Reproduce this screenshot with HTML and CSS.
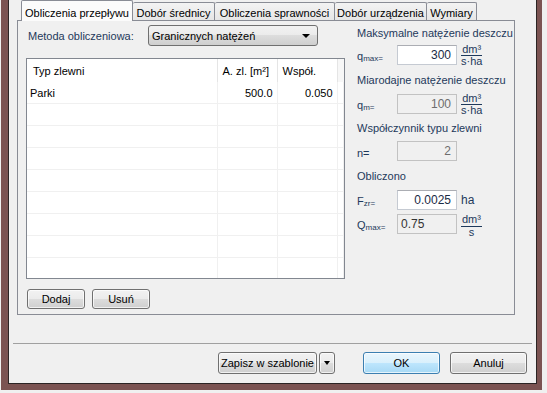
FILE: index.html
```html
<!DOCTYPE html>
<html lang="pl">
<head>
    <meta charset="UTF-8">
    <title>Obliczenia przepływu</title>
    <link rel="stylesheet" href="styles.css">
</head>
<body>
    <div class="window">
        <div class="client">
            <div class="tabctl">
                <div class="tabs">
                    <div class="tab active t1">Obliczenia przepływu</div>
                    <div class="tab t2">Dobór średnicy</div>
                    <div class="tab t3">Obliczenia sprawności</div>
                    <div class="tab t4">Dobór urządzenia</div>
                    <div class="tab t5">Wymiary</div>
                </div>
                <div class="page">
                    <div class="left">
                        <div class="method-row">
                            <span class="method-label">Metoda obliczeniowa:</span>
                            <div class="combo"><span>Granicznych natężeń</span><span class="arrow"></span></div>
                        </div>
                        <div class="listview">
                            <table>
                                <colgroup>
                                    <col class="c1"><col class="c2"><col class="c3"><col>
                                </colgroup>
                                <tr class="head">
                                    <th>Typ zlewni</th><th>A. zl. [m²]</th><th>Współ.</th><th class="filler"></th>
                                </tr>
                                <tr><td>Parki</td><td class="num">500.0</td><td class="num">0.050</td><td></td></tr>
                                <tr><td></td><td></td><td></td><td></td></tr>
                                <tr><td></td><td></td><td></td><td></td></tr>
                                <tr><td></td><td></td><td></td><td></td></tr>
                                <tr><td></td><td></td><td></td><td></td></tr>
                                <tr><td></td><td></td><td></td><td></td></tr>
                                <tr><td></td><td></td><td></td><td></td></tr>
                                <tr><td></td><td></td><td></td><td></td></tr>
                                <tr><td></td><td></td><td></td><td></td></tr>
                            </table>
                        </div>
                        <div class="list-buttons">
                            <button class="btn small">Dodaj</button>
                            <button class="btn small">Usuń</button>
                        </div>
                    </div>
                    <div class="right">
                        <div class="group-title">Maksymalne natężenie deszczu</div>
                        <div class="field f1">
                            <span class="sym">q<sub>max=</sub></span>
                            <span class="box">300</span>
                            <span class="frac"><span class="top">dm³</span><span>s·ha</span></span>
                        </div>
                        <div class="group-title g2">Miarodajne natężenie deszczu</div>
                        <div class="field f2">
                            <span class="sym">q<sub>m=</sub></span>
                            <span class="box disabled">100</span>
                            <span class="frac"><span class="top">dm³</span><span>s·ha</span></span>
                        </div>
                        <div class="group-title g3">Współczynnik typu zlewni</div>
                        <div class="field f3">
                            <span class="sym">n=</span>
                            <span class="box disabled">2</span>
                        </div>
                        <div class="group-title g4">Obliczono</div>
                        <div class="field f4">
                            <span class="sym">F<sub>zr=</sub></span>
                            <span class="box">0.0025</span>
                            <span class="unit">ha</span>
                        </div>
                        <div class="field f5">
                            <span class="sym">Q<sub>max=</sub></span>
                            <span class="box readonly">0.75</span>
                            <span class="frac"><span class="top">dm³</span><span>s</span></span>
                        </div>
                    </div>
                </div>
            </div>
            <div class="separator"></div>
            <div class="footer">
                <button class="btn save">Zapisz w szablonie</button>
                <button class="btn drop"><span class="arrow"></span></button>
                <button class="btn ok">OK</button>
                <button class="btn cancel">Anuluj</button>
            </div>
        </div>
    </div>
</body>
</html>
```

FILE: styles.css
```css
body {
    margin: 0;
    background-color: #f0f0f0;
    font-family: 'Liberation Sans', Arial, sans-serif;
    font-size: 11px;
    color: #000;
}

/* ramka okna */
.window {
    margin-left: 1px;
    width: 541px;
    height: 390px;
    box-sizing: border-box;
    border-style: solid;
    border-color: #7b5352;
    border-width: 0 5px 6px 7px;
}

.client {
    height: 100%;
    box-sizing: border-box;
    border: 1px solid #2b2424;
    border-top: none;
    background-color: #f0f0f0;
    display: flex;
    flex-direction: column;
}

/* zakładki */
.tabctl {
    margin-left: 8px;
    width: 498px;
}

.tabs {
    display: flex;
    align-items: flex-end;
    height: 20px;
    padding-left: 4px;
}

.tab {
    height: 18px;
    box-sizing: border-box;
    border: 1px solid #898c95;
    border-bottom: none;
    border-left: none;
    border-radius: 2px 2px 0 0;
    background: linear-gradient(#f3f3f3, #e6e6e6);
    display: flex;
    align-items: center;
    justify-content: center;
    padding-top: 2px;
    white-space: nowrap;
}

.tab.active {
    height: 21px;
    margin-bottom: -1px;
    border-left: 1px solid #898c95;
    background: #fbfbfb;
    position: relative;
    z-index: 1;
    padding-top: 3px;
}

.t1 { width: 112px; }
.t2 { width: 82px; }
.t3 { width: 120px; }
.t4 { width: 92px; }
.t5 { width: 50px; }

.page {
    height: 295px;
    box-sizing: border-box;
    border: 1px solid #898c95;
    display: flex;
    background-color: #f0f0f0;
}

/* lewa kolumna */
.left {
    padding: 4px 0 0 8px;
    width: 319px;
}

.method-row {
    display: flex;
    align-items: center;
    height: 21px;
}

.method-label {
    width: 120px;
    padding-left: 2px;
    color: #1e395b;
}

.combo {
    width: 170px;
    height: 21px;
    box-sizing: border-box;
    border: 1px solid #707070;
    border-radius: 3px;
    background: linear-gradient(#f2f2f2 0%, #ebebeb 50%, #dddddd 50%, #cfcfcf 100%);
    display: flex;
    align-items: center;
    justify-content: space-between;
    padding: 0 7px 0 3px;
}

.arrow {
    width: 0;
    height: 0;
    border-top: 4px solid #000;
    border-left: 4px solid transparent;
    border-right: 4px solid transparent;
}

.listview {
    margin-top: 12px;
    width: 319px;
    height: 221px;
    box-sizing: border-box;
    border: 1px solid #828790;
    background-color: #fff;
    overflow: hidden;
}

.listview table {
    width: 100%;
    table-layout: fixed;
    border-collapse: collapse;
}

.c1 { width: 190px; }
.c2 { width: 60px; }
.c3 { width: 60px; }

.listview th {
    height: 23px;
    padding: 0 0 0 6px;
    text-align: left;
    font-weight: normal;
    border-right: 1px solid #e5e5e5;
    white-space: nowrap;
}

.listview th:nth-child(2),
.listview th:nth-child(3) {
    padding-left: 5px;
}

.listview th.filler {
    background-color: #f7f7f7;
    border-right: none;
}

.listview td {
    height: 21px;
    padding: 0 0 0 3px;
    border-bottom: 1px solid #f0f0f0;
    border-right: 1px solid #f0f0f0;
}

.listview td.num {
    text-align: right;
    padding-right: 4px;
}

.list-buttons {
    display: flex;
    gap: 7px;
    margin-top: 10px;
    margin-left: 1px;
}

/* przyciski */
.btn {
    font: inherit;
    color: #000;
    height: 22px;
    padding: 0;
    border: 1px solid #707070;
    border-radius: 3px;
    background: linear-gradient(#f2f2f2 0%, #ebebeb 50%, #dddddd 50%, #cfcfcf 100%);
    box-shadow: inset 0 0 0 1px rgba(255, 255, 255, 0.7);
}

.btn.small {
    width: 58px;
    height: 20px;
}

/* prawa kolumna */
.right {
    margin-left: 12px;
    padding-top: 5px;
    color: #1e395b;
}

.group-title {
    height: 14px;
    line-height: 14px;
    white-space: nowrap;
}

.g2 { margin-top: 8px; }
.g3 { margin-top: 7px; }
.g4 { margin-top: 8px; }

.field {
    display: flex;
    align-items: center;
    height: 20px;
}

.f1 { margin-top: 5px; }
.f2 { margin-top: 7px; }
.f3 { margin-top: 6px; }
.f4 { margin-top: 7px; }
.f5 { margin-top: 4px; }

.sym {
    width: 40px;
    padding-top: 3px;
}

.sym sub {
    font-size: 8px;
    vertical-align: -1px;
}

.box {
    width: 60px;
    height: 20px;
    box-sizing: border-box;
    border: 1px solid #c5cad2;
    border-top-color: #abadb3;
    background-color: #fff;
    text-align: right;
    padding-right: 5px;
    line-height: 18px;
    font-size: 12px;
    color: #1b2b45;
}

.box.disabled {
    background-color: #f0f0f0;
    border-color: #c2c2c2;
    color: #6d6d6d;
}

.box.readonly {
    background-color: #f0f0f0;
    border-color: #c2c2c2;
    text-align: left;
    padding-left: 3px;
    color: #333;
}

.frac {
    margin-left: 4px;
    display: inline-flex;
    flex-direction: column;
    align-items: center;
    line-height: 10px;
    font-size: 11px;
}

.frac .top {
    border-bottom: 1px solid #1e395b;
    padding: 0 1px 1px;
}

.f5 .frac {
    margin-top: 4px;
    line-height: 11px;
}

.unit {
    margin-left: 4px;
    font-size: 12px;
}

/* dół okna */
.separator {
    margin: 28px 4px 0;
    border-top: 1px solid #a0a0a0;
}

.footer {
    display: flex;
    justify-content: flex-end;
    margin-top: 8px;
    padding-right: 9px;
}

.save { width: 99px; }
.drop {
    width: 16px;
    margin-left: 2px;
    display: flex;
    align-items: center;
    justify-content: center;
}
.drop .arrow {
    border-top-width: 4px;
    border-left-width: 3px;
    border-right-width: 3px;
}
.ok {
    width: 77px;
    margin-left: 28px;
    border-color: #3c7fb1;
    background: linear-gradient(#eaf6fd 0%, #d9f0fc 50%, #bee6fd 50%, #a7d9f5 100%);
}
.cancel {
    width: 77px;
    margin-left: 10px;
}
```
